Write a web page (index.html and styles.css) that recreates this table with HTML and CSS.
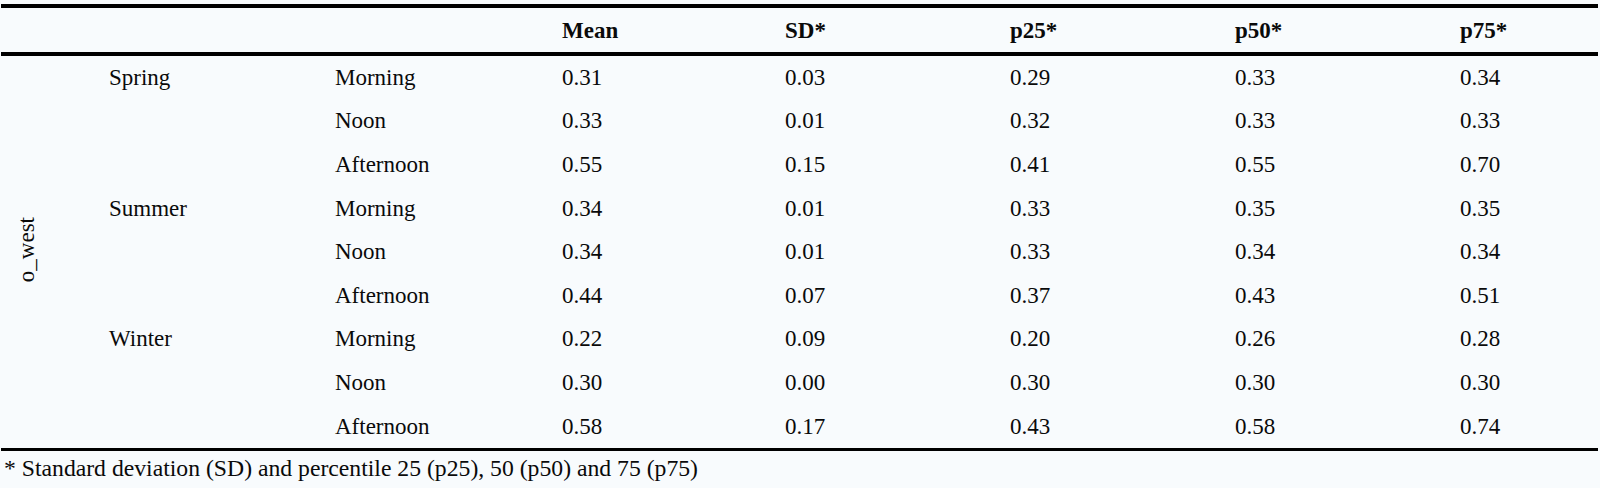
FILE: index.html
```html
<!DOCTYPE html>
<html>
<head>
<meta charset="utf-8">
<link rel="stylesheet" href="styles.css">
</head>
<body>
<table class="stats">
  <colgroup>
    <col class="c0"><col class="c1"><col class="c2"><col class="c3"><col class="c4"><col class="c5"><col class="c6"><col class="c7">
  </colgroup>
  <thead>
    <tr>
      <th></th><th></th><th></th>
      <th>Mean</th><th>SD*</th><th>p25*</th><th>p50*</th><th>p75*</th>
    </tr>
  </thead>
  <tbody>
    <tr>
      <td rowspan="9" class="var"><span class="vert">o_west</span></td>
      <td>Spring</td><td>Morning</td><td>0.31</td><td>0.03</td><td>0.29</td><td>0.33</td><td>0.34</td>
    </tr>
    <tr><td></td><td>Noon</td><td>0.33</td><td>0.01</td><td>0.32</td><td>0.33</td><td>0.33</td></tr>
    <tr><td></td><td>Afternoon</td><td>0.55</td><td>0.15</td><td>0.41</td><td>0.55</td><td>0.70</td></tr>
    <tr><td>Summer</td><td>Morning</td><td>0.34</td><td>0.01</td><td>0.33</td><td>0.35</td><td>0.35</td></tr>
    <tr><td></td><td>Noon</td><td>0.34</td><td>0.01</td><td>0.33</td><td>0.34</td><td>0.34</td></tr>
    <tr><td></td><td>Afternoon</td><td>0.44</td><td>0.07</td><td>0.37</td><td>0.43</td><td>0.51</td></tr>
    <tr><td>Winter</td><td>Morning</td><td>0.22</td><td>0.09</td><td>0.20</td><td>0.26</td><td>0.28</td></tr>
    <tr><td></td><td>Noon</td><td>0.30</td><td>0.00</td><td>0.30</td><td>0.30</td><td>0.30</td></tr>
    <tr><td></td><td>Afternoon</td><td>0.58</td><td>0.17</td><td>0.43</td><td>0.58</td><td>0.74</td></tr>
  </tbody>
</table>
<p class="note">* Standard deviation (SD) and percentile 25 (p25), 50 (p50) and 75 (p75)</p>
</body>
</html>
```
FILE: styles.css
```css
html, body {
  margin: 0;
  background: #f8fbfd;
}
body {
  padding: 4px 2px 0 1px;
  font-family: "Liberation Serif", "Times New Roman", serif;
  font-size: 23px;
  color: #0a0a0a;
}
.stats {
  width: 1597px;
  border-collapse: separate;
  border-spacing: 0;
  table-layout: fixed;
  border-top: 4px solid #000;
  border-bottom: 3px solid #000;
}
.c0 { width: 102px; }
.c1 { width: 226px; }
.c2 { width: 227px; }
.c3 { width: 223px; }
.c4 { width: 225px; }
.c5 { width: 225px; }
.c6 { width: 225px; }
.c7 { width: 144px; }
.stats th,
.stats td {
  box-sizing: border-box;
  padding: 0 0 0 6px;
  text-align: left;
  vertical-align: middle;
  white-space: nowrap;
  line-height: 26px;
}
.stats thead th {
  height: 48px;
  font-weight: bold;
  border-bottom: 4px solid #000;
  padding-top: 2px;
}
.stats tbody td {
  height: 43.6px;
}
.stats td.var {
  padding-left: 13px;
}
.vert {
  display: inline-block;
  writing-mode: vertical-rl;
  transform: rotate(180deg);
  line-height: 25px;
}
.note {
  margin: 4px 0 0 3px;
  font-size: 23.7px;
  line-height: 26px;
}
```
